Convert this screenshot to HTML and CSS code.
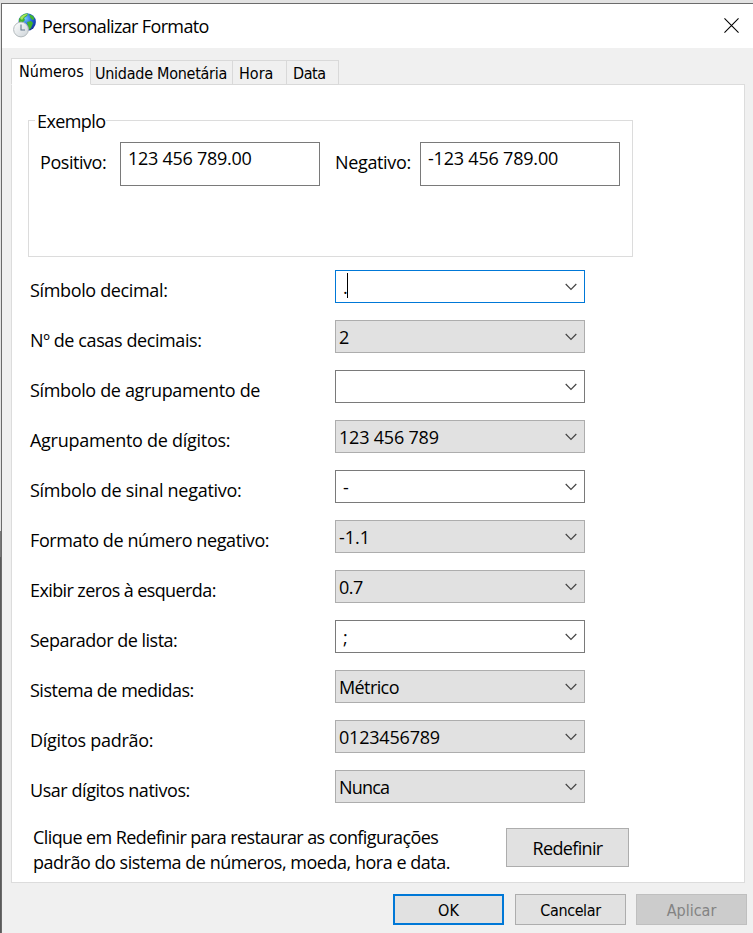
FILE: index.html
```html
<!DOCTYPE html>
<html lang="pt">
<head>
<meta charset="utf-8">
<title>Personalizar Formato</title>
<link rel="stylesheet" href="styles.css">
</head>
<body>
<svg width="0" height="0" class="defs"><defs><symbol id="chev" viewBox="0 0 12 8"><path d="M.7 1 6 6.300 11.300 1" fill="none" stroke="#444" stroke-width="1.200"/></symbol></defs></svg>
<main class="window">
  <header class="titlebar">
    <svg class="app-icon" viewBox="0 0 24 25">
      <defs>
        <radialGradient id="sea" cx=".4" cy=".3" r=".75"><stop offset="0" stop-color="#75c8ff"/><stop offset=".5" stop-color="#2264dc"/><stop offset="1" stop-color="#102a93"/></radialGradient>
        <linearGradient id="face" x2="1" y2="1"><stop offset="0" stop-color="#fff"/><stop offset="1" stop-color="#ccd3d8"/></linearGradient>
      </defs>
      <circle cx="14.200" cy="9" r="8.700" fill="url(#sea)"/>
      <path d="M6 6C8 2 12 0 15 .5L14 3l-3 2 1 2-2 2-3 3-1-2zM16 1l4 2 1.500 3-2 1-2-2zM14 9l4-1 2 2-2 5-2 2-1-4z" fill="#43b52c"/>
      <path d="M7 5Q10 1 15 1L11 4 9 7z" fill="#a8e55d"/>
      <circle cx="8" cy="16.500" r="7.400" fill="url(#face)" stroke="#b3babd"/>
      <path d="M8 11.500v5.500h4" fill="none" stroke="#64798b" stroke-width="1.100"/>
    </svg>
    <h1 class="ls-65">Personalizar Formato</h1>
    <svg class="close" viewBox="0 0 16 16"><path d="M.5.5l15 15M15.500.5l-15 15" stroke="#000" stroke-width="1.150"/></svg>
  </header>
  <nav class="tabs">
    <span class="tab active">Números</span>
    <span class="tab currency ls-25">Unidade Monetária</span>
    <span class="tab time">Hora</span>
    <span class="tab date ls-40">Data</span>
  </nav>
  <section class="panel">
    <fieldset class="example">
      <legend class="ls-60">Exemplo</legend>
      <div class="samples">
        <label class="pos ls-45">Positivo:</label><output class="ls-25">123 456 789.00</output>
        <label class="neg ls-35">Negativo:</label><output class="ls-20">-123 456 789.00</output>
      </div>
    </fieldset>
    <div class="rows">
      <div class="row"><label class="ls-35">Símbolo decimal:</label><div class="combo edit focus"><span class="ls-65">.</span><i class="caret"></i><svg><use href="#chev"/></svg></div></div>
      <div class="row"><label class="ls-40">Nº de casas decimais:</label><div class="combo"><span>2</span><svg><use href="#chev"/></svg></div></div>
      <div class="row"><label class="ls-35">Símbolo de agrupamento de</label><div class="combo edit"><span></span><svg><use href="#chev"/></svg></div></div>
      <div class="row"><label class="ls-25">Agrupamento de dígitos:</label><div class="combo"><span class="ls-20">123 456 789</span><svg><use href="#chev"/></svg></div></div>
      <div class="row"><label class="ls-25">Símbolo de sinal negativo:</label><div class="combo edit"><span>-</span><svg><use href="#chev"/></svg></div></div>
      <div class="row"><label class="ls-40">Formato de número negativo:</label><div class="combo"><span>-1.1</span><svg><use href="#chev"/></svg></div></div>
      <div class="row"><label class="ls-60">Exibir zeros à esquerda:</label><div class="combo"><span class="ls-45">0.7</span><svg><use href="#chev"/></svg></div></div>
      <div class="row"><label class="ls-50">Separador de lista:</label><div class="combo edit"><span>;</span><svg><use href="#chev"/></svg></div></div>
      <div class="row"><label class="ls-50">Sistema de medidas:</label><div class="combo"><span class="ls-60">Métrico</span><svg><use href="#chev"/></svg></div></div>
      <div class="row"><label class="ls-25">Dígitos padrão:</label><div class="combo"><span class="ls-20">0123456789</span><svg><use href="#chev"/></svg></div></div>
      <div class="row"><label class="ls-45">Usar dígitos nativos:</label><div class="combo"><span class="ls-80">Nunca</span><svg><use href="#chev"/></svg></div></div>
    </div>
    <div class="reset">
      <p><span class="ls-60">Clique em Redefinir para restaurar as configurações</span><br><span class="ls-48">padrão do sistema de números, moeda, hora e data.</span></p>
      <button type="button" class="ls-65">Redefinir</button>
    </div>
  </section>
  <footer>
    <button type="button" class="ok">OK</button>
    <button type="button" class="ls-40">Cancelar</button>
    <button type="button" disabled>Aplicar</button>
  </footer>
</main>
</body>
</html>
```
FILE: styles.css
```css
* { box-sizing: border-box; }
body { margin: 0; background: linear-gradient(#e2e2e2 0 531px, #777 531px 557px, #5a5a5a 557px) no-repeat 0 0 / 100% 933px; font: 18px/24px "Open Sans", "Noto Sans", sans-serif; color: #000; overflow: hidden; }
.defs { display: block; }
.window { margin: 3px 0 0 1px; height: 930px; border: solid #6b6b6b; border-width: 1px 0 0 1px; background: #f0f0f0; }
.titlebar { height: 44px; background: #fff; display: flex; align-items: flex-start; padding: 9px 13px 0 11px; }
.app-icon { width: 24px; height: 25px; }
h1 { margin: 1px 0 0 5px; font: inherit; white-space: nowrap; }
.close { width: 15px; height: 15px; margin: 5px 1px 0 auto; }
.tabs { display: flex; align-items: flex-end; height: 37px; padding-left: 9px; margin-bottom: -1px; position: relative; font: 16px/20px "DejaVu Sans Condensed", sans-serif; }
.tab { height: 25px; border: 1px solid #d9d9d9; border-left: 0; padding: 3px 0 0 5px; white-space: nowrap; }
.tab.active { height: 27px; width: 80px; padding: 3px 0 0 7px; background: #fff; border-left: 1px solid #d9d9d9; border-bottom-color: #fff; }
.currency { width: 142px; padding-left: 4px; }
.time { width: 54px; padding-left: 6px; }
.date { width: 52px; padding-left: 6px; }
.panel { margin-left: 9px; width: 734px; height: 799px; background: #fff; border: 1px solid #dcdcdc; padding: 23px 0 0 16px; }
.example { margin: 0; width: 605px; height: 149px; padding: 0; border: 1px solid #dcdcdc; min-width: 0; }
legend { margin-left: 6px; padding: 1px 1px 0 2px; height: 24px; }
.samples { display: flex; white-space: nowrap; padding-left: 11px; margin-top: 10px; }
.samples label { padding-top: 8px; width: 80px; }
.samples .neg { width: 85px; margin-left: 15px; }
output { width: 200px; height: 44px; border: 1px solid #7a7a7a; padding: 3px 0 0 7px; }
.rows { margin-top: 13px; }
.row { display: flex; height: 50px; }
.row label { width: 307px; padding: 8px 0 0 2px; white-space: nowrap; }
.combo { width: 250px; height: 33px; border: 1px solid #adadad; background: #e1e1e1; display: flex; align-items: flex-start; padding: 4px 7px 0 3px; white-space: nowrap; }
.combo svg { width: 12px; height: 8px; margin: 8px 0 0 auto; }
.edit { background: #fff; border-color: #7a7a7a; padding-left: 7px; }
.focus { border-color: #0078d7; }
.caret { width: 1px; height: 25px; background: #000; margin-top: -2px; }
.reset { display: flex; margin-top: 8px; }
.reset p { margin: -3px 0 0 5px; width: 473px; line-height: 25px; white-space: nowrap; }
button { font: inherit; letter-spacing: normal; color: #000; border: 1px solid #adadad; background: #e1e1e1; padding: 0; white-space: nowrap; }
.reset button { width: 123px; height: 39px; }
footer { display: flex; padding: 11px 0 0 391px; font: 16px/20px "DejaVu Sans Condensed", sans-serif; gap: 11px; }
footer button { width: 111px; height: 31px; flex: none; padding-top: 2px; }
footer .ok { border: 2px solid #0078d7; }
button:disabled { color: #838383; background: #ccc; border-color: #bfbfbf; margin-left: -1px; }
.ls-20 { letter-spacing: -.2px; }
.ls-25 { letter-spacing: -.27px; }
.ls-35 { letter-spacing: -.35px; }
.ls-40 { letter-spacing: -.4px; }
.ls-45 { letter-spacing: -.45px; }
.ls-48 { letter-spacing: -.48px; }
.ls-50 { letter-spacing: -.5px; }
.ls-60 { letter-spacing: -.6px; }
.ls-65 { letter-spacing: -.65px; }
.ls-80 { letter-spacing: -.8px; }
```
